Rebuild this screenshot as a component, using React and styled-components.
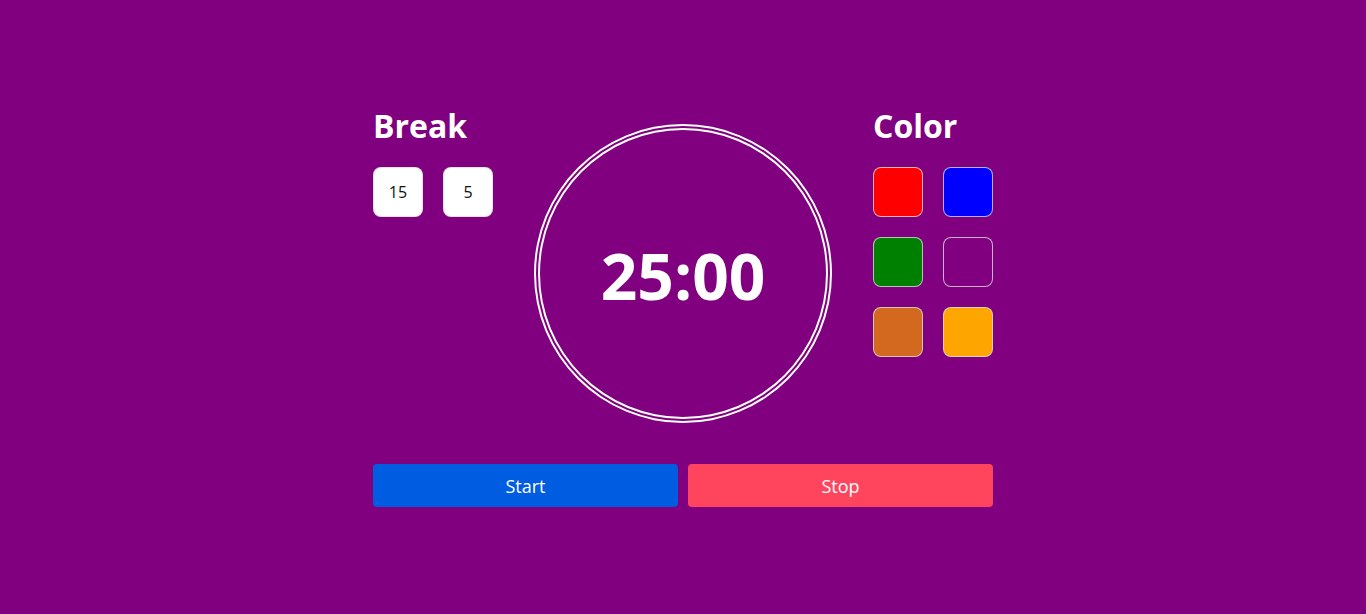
import React from "react";
import styled, { createGlobalStyle } from "styled-components";

const Global = createGlobalStyle`
  html, body { margin: 0; padding: 0; background: #800080; }
  body { font-family: "Open Sans", "Noto Sans", sans-serif; color: #fff; }
`;

const Page = styled.div`
  min-height: 614px;
  display: flex;
  justify-content: center;
  padding-top: 104px;
  box-sizing: border-box;
`;

const Wrapper = styled.div`
  width: 620px;
  display: flex;
  flex-direction: column;
  gap: 41px;
`;

const Top = styled.div`
  display: grid;
  grid-template-columns: 120px 1fr 120px;
  align-items: start;
`;

const Side = styled.div`
  display: flex;
  flex-direction: column;
`;

const Heading = styled.h2`
  margin: 0 0 20px;
  font-size: 32px;
  font-weight: 700;
  line-height: 43px;
`;

const Grid = styled.div`
  display: grid;
  grid-template-columns: 50px 50px;
  gap: 20px;
`;

const Box = styled.button`
  width: 50px;
  height: 50px;
  box-sizing: border-box;
  border-radius: 8px;
  border: 1px solid rgba(220, 220, 220, 0.8);
  background: ${(p) => p.$bg || "#fff"};
  color: #111;
  font-family: "Open Sans", sans-serif;
  font-size: 16px;
  padding: 0;
  cursor: pointer;
`;

const CircleWrap = styled.div`
  display: flex;
  justify-content: center;
  padding-top: 20px;
`;

const Circle = styled.div`
  width: 298px;
  height: 299px;
  box-sizing: border-box;
  border-radius: 50%;
  border: 6px double #fff;
  display: flex;
  align-items: center;
  justify-content: center;
`;

const Time = styled.span`
  font-size: 64px;
  font-weight: 700;
  line-height: 1;
  margin-top: 4px;
`;

const Buttons = styled.div`
  display: grid;
  grid-template-columns: 1fr 1fr;
  gap: 10px;
`;

const Action = styled.button`
  height: 43px;
  border: none;
  border-radius: 4px;
  background: ${(p) => p.$bg};
  color: #fff;
  font-family: "Open Sans", sans-serif;
  font-size: 18px;
  cursor: pointer;
`;

const colors = ["#ff0000", "#0000ff", "#008000", "#800080", "#d2691e", "#ffa500"];

export default function App() {
  return (
    <>
      <Global />
      <Page>
        <Wrapper>
          <Top>
            <Side>
              <Heading>Break</Heading>
              <Grid>
                <Box>15</Box>
                <Box>5</Box>
              </Grid>
            </Side>
            <CircleWrap>
              <Circle>
                <Time>25:00</Time>
              </Circle>
            </CircleWrap>
            <Side>
              <Heading>Color</Heading>
              <Grid>
                {colors.map((c) => (
                  <Box key={c} $bg={c} />
                ))}
              </Grid>
            </Side>
          </Top>
          <Buttons>
            <Action $bg="#005ce0">Start</Action>
            <Action $bg="#ff455e">Stop</Action>
          </Buttons>
        </Wrapper>
      </Page>
    </>
  );
}
